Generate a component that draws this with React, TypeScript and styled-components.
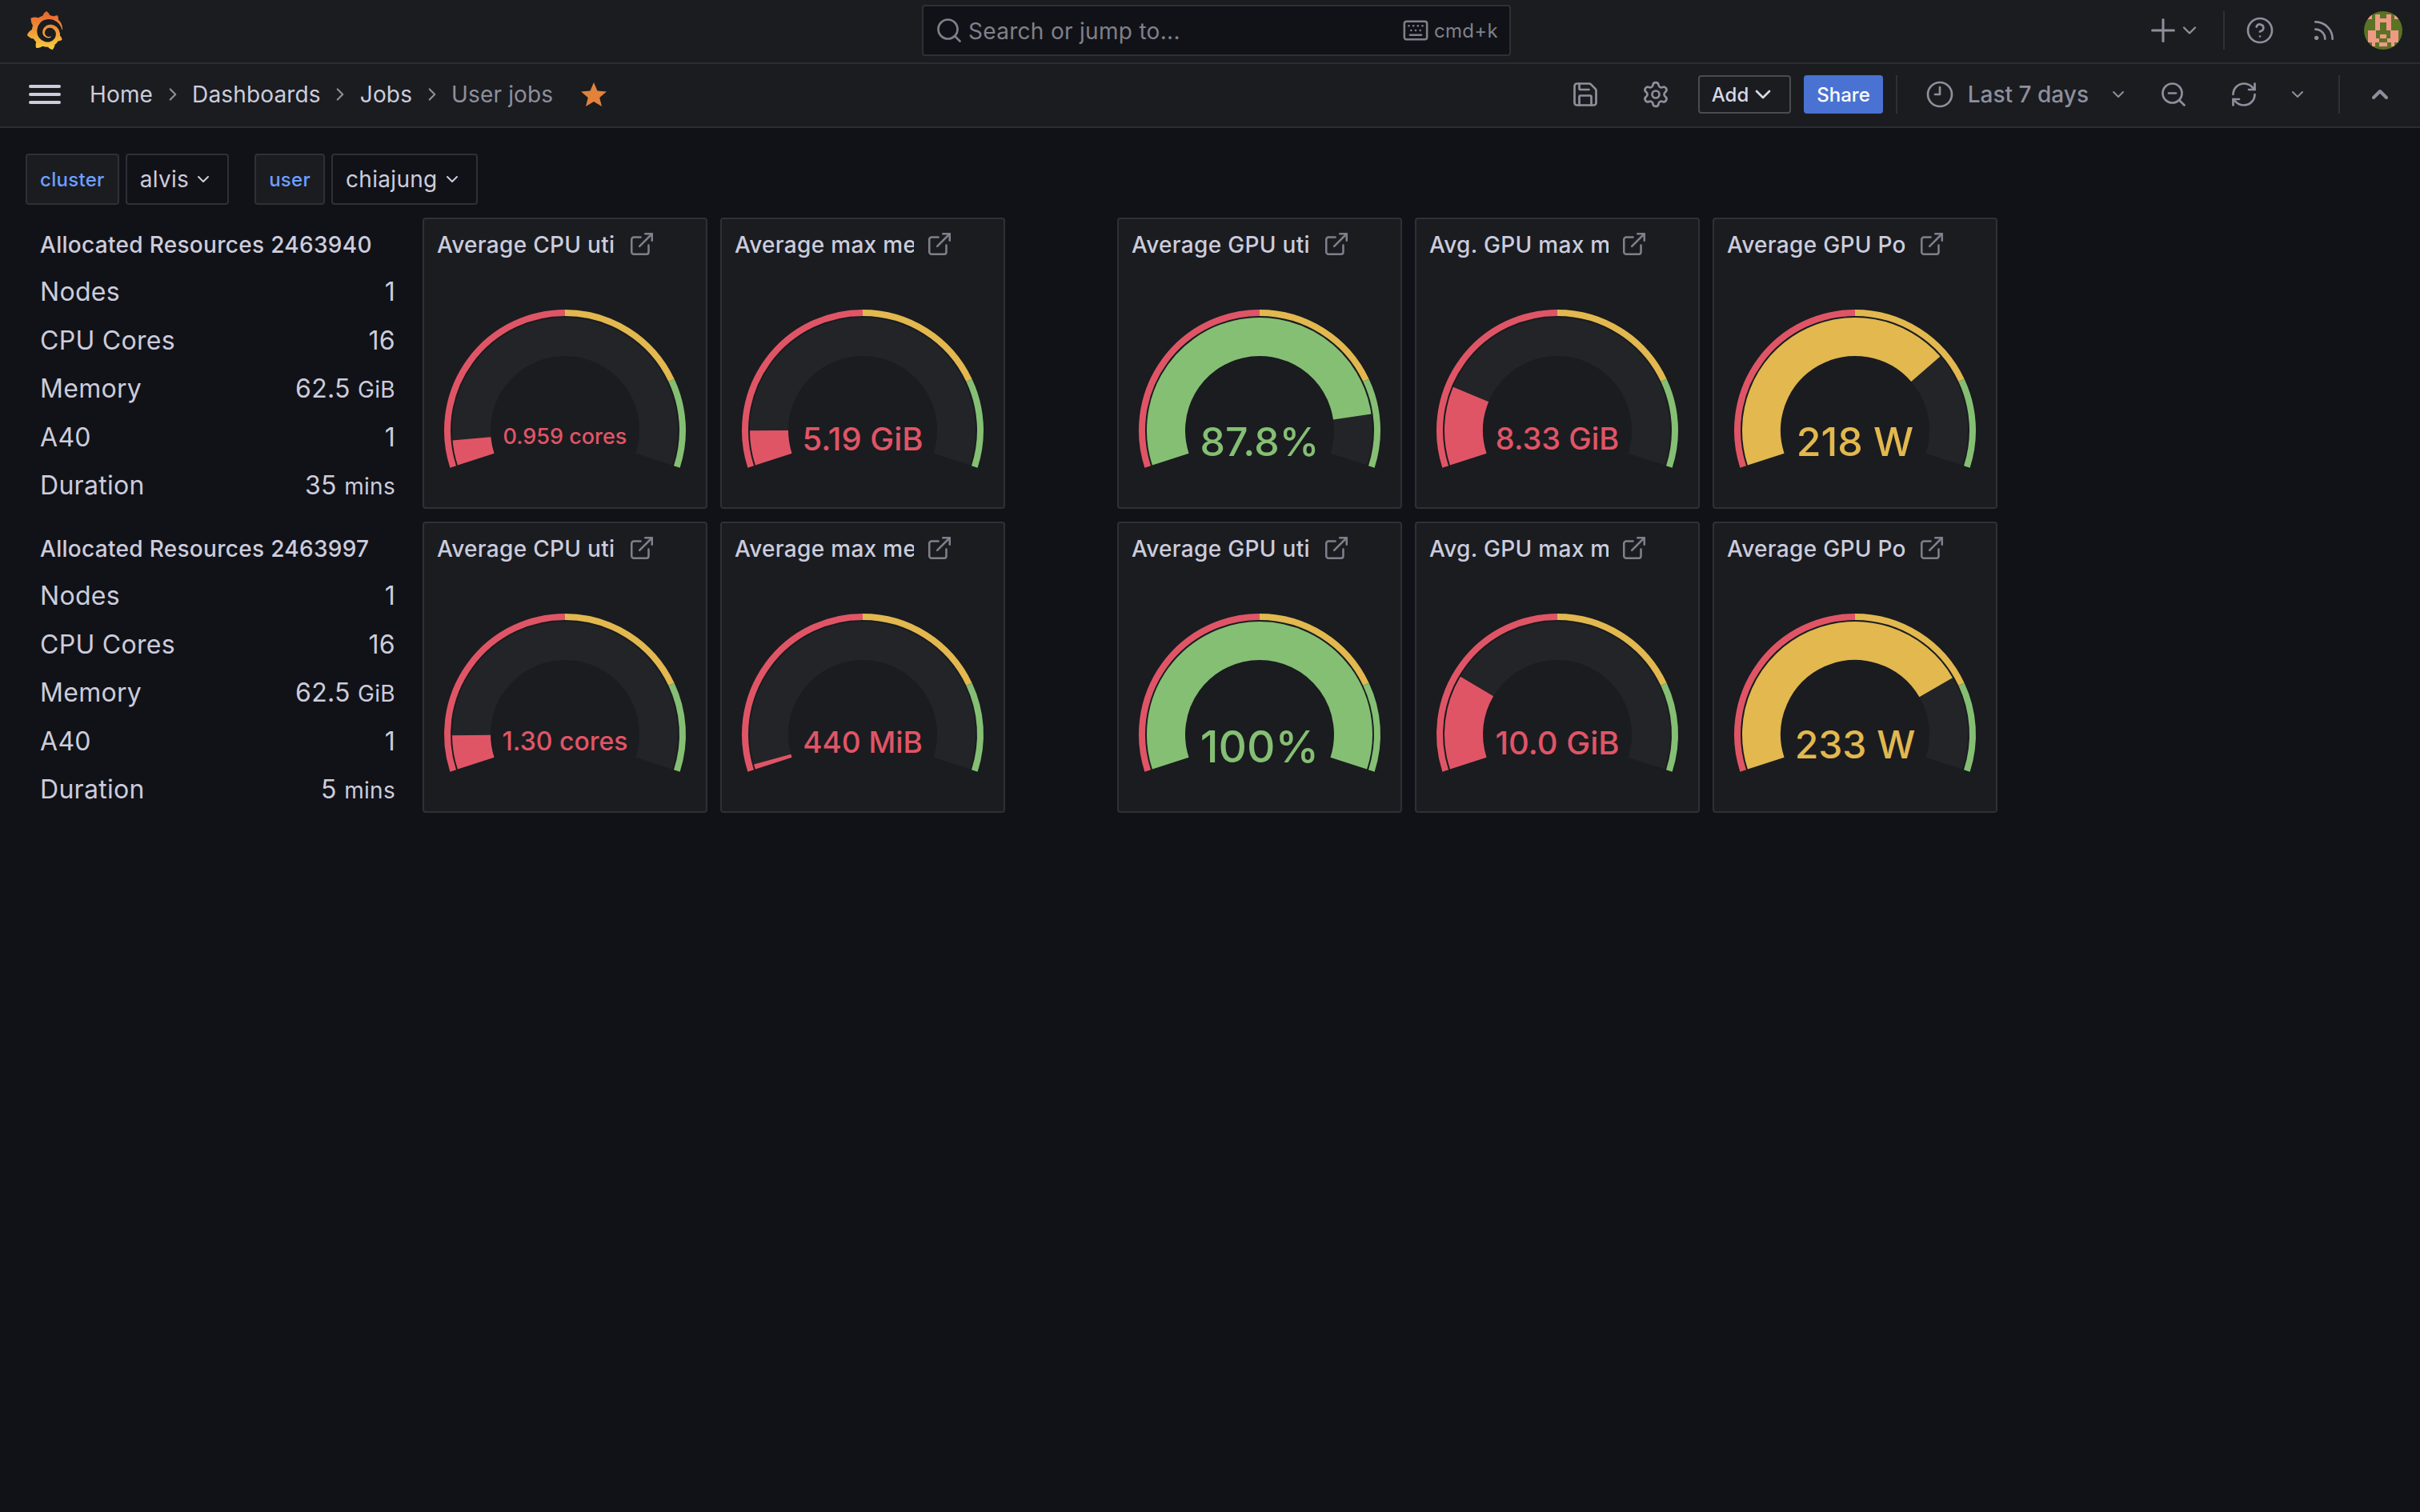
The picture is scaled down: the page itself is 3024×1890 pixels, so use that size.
import React from 'react'
import styled, { createGlobalStyle } from 'styled-components'
import {
  ChevronDown,
  ChevronRight,
  ChevronUp,
  CircleHelp,
  Clock9,
  ExternalLink,
  Keyboard,
  Plus,
  RefreshCw,
  Rss,
  Save,
  Search,
  Settings,
  ZoomOut,
} from 'lucide-react'
import { SiGrafana } from 'react-icons/si'

const RED = '#e05566'
const YELLOW = '#e2b84f'
const GREEN = '#85bf73'

const GlobalStyle = createGlobalStyle`
  html, body {
    margin: 0;
    background: #111217;
    color: #ccccdc;
    font-family: Inter, "Noto Sans", sans-serif;
    letter-spacing: 0.3px;
  }
  * {
    box-sizing: border-box;
  }
`

const Page = styled.div`
  min-height: 1890px;
  background: #111217;
`

const TopBar = styled.header`
  display: grid;
  grid-template-columns: 1fr 736px 1fr;
  align-items: center;
  height: 80px;
  padding: 0 22px 2px 38px;
  background: #1a1c20;
  border-bottom: 2px solid #2c2d32;
`

const LogoBox = styled.div`
  display: flex;
  align-items: center;
  margin-left: -6px;
  color: #e8602f;
`

const SearchBox = styled.div`
  display: flex;
  align-items: center;
  height: 64px;
  padding: 0 14px 0 14px;
  background: #111217;
  border: 2px solid #2f3036;
  border-radius: 4px;
  color: #7f808b;
`

const SearchText = styled.span`
  flex: 1;
  margin-left: 6px;
  padding-top: 1px;
  font-size: 28px;
`

const Shortcut = styled.span`
  margin-left: 6px;
  font-size: 24px;
`

const TopActions = styled.div`
  display: flex;
  align-items: center;
  justify-content: flex-end;
  color: #8e8f9c;
`

const IconSlot = styled.span<{ $w: number; $ml?: number }>`
  display: flex;
  align-items: center;
  justify-content: center;
  flex: none;
  width: ${p => p.$w}px;
  margin-left: ${p => p.$ml ?? 0}px;
  color: #8e8f9c;
`

const Divider = styled.span<{ $ml: number; $h?: number }>`
  flex: none;
  width: 2px;
  height: ${p => p.$h ?? 48}px;
  margin-left: ${p => p.$ml}px;
  background: #2f3036;
`

const Avatar = styled.svg`
  display: block;
  width: 48px;
  height: 48px;
  margin-left: 30px;
`

const NavBar = styled.nav`
  display: flex;
  align-items: center;
  height: 80px;
  padding: 0 34px 2px 36px;
  background: #1a1c20;
  border-bottom: 2px solid #2c2d32;
`

const Burger = styled.svg`
  display: block;
  flex: none;
  width: 40px;
  height: 24px;
  margin-right: 36px;
`

const Crumb = styled.span<{ $muted?: boolean }>`
  font-size: 28px;
  letter-spacing: 0.15px;
  color: ${p => (p.$muted ? '#8e8f9c' : '#ccccdc')};
`

const CrumbSep = styled.span`
  display: flex;
  justify-content: center;
  width: 49px;
  color: #8e8f9c;
`

const StarIcon = styled.svg`
  display: block;
  width: 32px;
  height: 30px;
  margin-left: 35px;
`

const NavActions = styled.div`
  display: flex;
  align-items: center;
  margin-left: auto;
`

const AddButton = styled.button`
  display: flex;
  align-items: center;
  gap: 2px;
  height: 48px;
  margin-left: 29px;
  padding: 0 17px 0 15px;
  background: transparent;
  border: 2px solid #4b4c52;
  border-radius: 4px;
  color: #d8d8e5;
  font: 500 24px Inter, sans-serif;
`

const ShareButton = styled.button`
  height: 48px;
  margin-left: 16px;
  padding: 0 16px;
  background: #4a72d2;
  border: 0;
  border-radius: 4px;
  color: #fff;
  font: 500 24px Inter, sans-serif;
`

const TimeLabel = styled.span`
  margin-left: 17px;
  color: #8e8f9c;
  font-size: 28px;
  font-weight: 500;
  letter-spacing: 0;
`

const Variables = styled.div`
  display: flex;
  align-items: center;
  padding: 32px 32px 16px;
`

const VarLabel = styled.span`
  display: flex;
  align-items: center;
  height: 64px;
  padding: 0 16px;
  background: #1a1c20;
  border: 2px solid #2f3036;
  border-radius: 4px;
  color: #6e9fff;
  font-size: 24px;
  font-weight: 500;
`

const VarValue = styled.span<{ $last?: boolean }>`
  display: flex;
  align-items: center;
  gap: 6px;
  height: 64px;
  margin-left: 8px;
  margin-right: ${p => (p.$last ? 0 : 32)}px;
  padding: 0 18px 0 16px;
  border: 2px solid #2f3036;
  border-radius: 4px;
  color: #ccccdc;
  font-size: 28px;
`

const Board = styled.main`
  display: grid;
  grid-template-columns: repeat(24, 108px);
  grid-auto-rows: 364px;
  gap: 16px;
  padding-left: 32px;
`

const StatPanel = styled.section`
  grid-column: 1 / span 4;
  padding: 0 16px;
  border: 2px solid transparent;
`

const StatTitle = styled.h2`
  height: 61px;
  margin: 0;
  color: #ccccdc;
  font-size: 28px;
  font-weight: 500;
  line-height: 65px;
  white-space: nowrap;
`

const StatRow = styled.div`
  display: flex;
  justify-content: space-between;
  height: 60.5px;
  color: #ccccdc;
  font-size: 32px;
  line-height: 60.5px;
`

const StatUnit = styled.span`
  font-size: 28px;
`

const GaugePanel = styled.section<{ $start?: number }>`
  grid-column: ${p => (p.$start ? `${p.$start} / span 3` : 'span 3')};
  display: flex;
  flex-direction: column;
  background: #1a1c20;
  border: 2px solid #2f3036;
  border-radius: 4px;
`

const PanelHeader = styled.div`
  display: flex;
  align-items: center;
  flex: none;
  height: 62px;
  padding-left: 16px;
`

const PanelTitle = styled.h3`
  flex: none;
  width: 224px;
  margin: 0;
  padding-top: 2px;
  overflow: hidden;
  color: #ccccdc;
  font-size: 28px;
  font-weight: 500;
  white-space: nowrap;
`

const LinkIcon = styled(ExternalLink)`
  flex: none;
  margin-left: 15px;
  color: #7f808b;
`

const GaugeSvg = styled.svg`
  display: block;
  width: 352px;
  height: 298px;
`

const GaugeValue = styled.text`
  font-family: Inter, sans-serif;
  font-weight: 500;
  letter-spacing: 0;
  text-anchor: middle;
`

const HiddenDefs = styled.svg`
  position: absolute;
  width: 0;
  height: 0;
`

const CX = 176
const CY = 202

function pt(r: number, f: number) {
  const a = ((-108 + 216 * f) * Math.PI) / 180
  return `${(CX + r * Math.sin(a)).toFixed(2)} ${(CY - r * Math.cos(a)).toFixed(2)}`
}

function arc(r: number, f0: number, f1: number) {
  const large = (f1 - f0) * 216 > 180 ? 1 : 0
  return `M ${pt(r, f0)} A ${r} ${r} 0 ${large} 1 ${pt(r, f1)}`
}

type GaugeData = {
  title: string
  value: string
  fraction: number
  color: string
  size: number
  start?: number
}

const Gauge = ({ title, value, fraction, color, size, start }: GaugeData) => (
  <GaugePanel $start={start}>
    <PanelHeader>
      <PanelTitle>{title}</PanelTitle>
      <LinkIcon size={34} strokeWidth={1.8} />
    </PanelHeader>
    <GaugeSvg viewBox="0 0 352 298">
      <path d={arc(147, 0, 0.5)} fill="none" stroke={RED} strokeWidth={8} />
      <path d={arc(147, 0.5, 0.8)} fill="none" stroke={YELLOW} strokeWidth={8} />
      <path d={arc(147, 0.8, 1)} fill="none" stroke={GREEN} strokeWidth={8} />
      <path d={arc(117, 0, 1)} fill="none" stroke="#232428" strokeWidth={48} />
      <path d={arc(117, 0, fraction)} fill="none" stroke={color} strokeWidth={48} />
      <GaugeValue x={CX} y={CY + size * 0.63} fill={color} fontSize={size}>
        {value}
      </GaugeValue>
    </GaugeSvg>
  </GaugePanel>
)

const Stat = ({ id, duration, unit }: { id: string; duration: string; unit: string }) => (
  <StatPanel>
    <StatTitle>Allocated Resources {id}</StatTitle>
    <StatRow><span>Nodes</span><span>1</span></StatRow>
    <StatRow><span>CPU Cores</span><span>16</span></StatRow>
    <StatRow><span>Memory</span><span>62.5 <StatUnit>GiB</StatUnit></span></StatRow>
    <StatRow><span>A40</span><span>1</span></StatRow>
    <StatRow><span>Duration</span><span>{duration} <StatUnit>{unit}</StatUnit></span></StatRow>
  </StatPanel>
)

const avatarBlocks = [
  [57, 60, 15, 15], [156, 60, 15, 15],
  [84, 57, 18, 60], [126, 57, 18, 60], [84, 72, 60, 15],
  [57, 117, 30, 45], [141, 117, 30, 45],
  [102, 132, 24, 15], [87, 147, 12, 15], [129, 147, 12, 15],
  [99, 162, 30, 15], [72, 162, 12, 15], [144, 162, 12, 15],
]

const firstRow: GaugeData[] = [
  { title: 'Average CPU uti', value: '0.959 cores', fraction: 0.06, color: RED, size: 27 },
  { title: 'Average max me', value: '5.19 GiB', fraction: 0.083, color: RED, size: 40 },
  { title: 'Average GPU uti', value: '87.8%', fraction: 0.878, color: GREEN, size: 50, start: 12 },
  { title: 'Avg. GPU max m', value: '8.33 GiB', fraction: 0.188, color: RED, size: 38 },
  { title: 'Average GPU Po', value: '218 W', fraction: 0.727, color: YELLOW, size: 50 },
]

const secondRow: GaugeData[] = [
  { title: 'Average CPU uti', value: '1.30 cores', fraction: 0.081, color: RED, size: 32 },
  { title: 'Average max me', value: '440 MiB', fraction: 0.012, color: RED, size: 37 },
  { title: 'Average GPU uti', value: '100%', fraction: 1, color: GREEN, size: 55, start: 12 },
  { title: 'Avg. GPU max m', value: '10.0 GiB', fraction: 0.226, color: RED, size: 40 },
  { title: 'Average GPU Po', value: '233 W', fraction: 0.777, color: YELLOW, size: 48 },
]

const App: React.FunctionComponent = () => {
  return (
    <>
      <GlobalStyle />
      <HiddenDefs aria-hidden="true">
        <defs>
          <linearGradient id="grafana-logo" x1="0" y1="0" x2="0" y2="1">
            <stop offset="0" stopColor="#e8602f" />
            <stop offset="1" stopColor="#f6cf3f" />
          </linearGradient>
        </defs>
      </HiddenDefs>
      <Page>
        <TopBar>
          <LogoBox>
            <SiGrafana size={48} fill="url(#grafana-logo)" />
          </LogoBox>
          <SearchBox>
            <Search size={36} strokeWidth={1.8} />
            <SearchText>Search or jump to...</SearchText>
            <Keyboard size={34} strokeWidth={1.8} />
            <Shortcut>cmd+k</Shortcut>
          </SearchBox>
          <TopActions>
            <Plus size={46} strokeWidth={1.6} />
            <IconSlot $w={32} $ml={-6}><ChevronDown size={28} strokeWidth={2} /></IconSlot>
            <Divider $ml={26} />
            <IconSlot $w={40} $ml={24}><CircleHelp size={36} strokeWidth={1.8} /></IconSlot>
            <IconSlot $w={40} $ml={40}><Rss size={32} strokeWidth={2} /></IconSlot>
            <Avatar viewBox="42 45 144 144">
              <clipPath id="avatar-clip">
                <circle cx="114" cy="117" r="72" />
              </clipPath>
              <g clipPath="url(#avatar-clip)">
                <rect x="42" y="45" width="144" height="144" fill="#5a7324" />
                {avatarBlocks.map(([x, y, w, h]) => (
                  <rect key={`${x}-${y}`} x={x} y={y} width={w} height={h} fill="#ef9a87" />
                ))}
              </g>
            </Avatar>
          </TopActions>
        </TopBar>
        <NavBar>
          <Burger viewBox="0 0 40 24">
            <rect x="0" y="0" width="40" height="4" rx="2" fill="#ccccdc" />
            <rect x="0" y="10" width="40" height="4" rx="2" fill="#ccccdc" />
            <rect x="0" y="20" width="40" height="4" rx="2" fill="#ccccdc" />
          </Burger>
          <Crumb>Home</Crumb>
          <CrumbSep><ChevronRight size={26} strokeWidth={2} /></CrumbSep>
          <Crumb>Dashboards</Crumb>
          <CrumbSep><ChevronRight size={26} strokeWidth={2} /></CrumbSep>
          <Crumb>Jobs</Crumb>
          <CrumbSep><ChevronRight size={26} strokeWidth={2} /></CrumbSep>
          <Crumb $muted>User jobs</Crumb>
          <StarIcon viewBox="0 0 32 30">
            <path d="M16 0 L20.5 10.6 L32 11.5 L23.2 19 L26 30 L16 24.1 L6 30 L8.8 19 L0 11.5 L11.5 10.6 Z" fill="#e3823a" />
          </StarIcon>
          <NavActions>
            <IconSlot $w={48}><Save size={36} strokeWidth={1.8} /></IconSlot>
            <IconSlot $w={48} $ml={40}><Settings size={36} strokeWidth={1.8} /></IconSlot>
            <AddButton>Add<ChevronDown size={32} strokeWidth={2} /></AddButton>
            <ShareButton>Share</ShareButton>
            <Divider $ml={16} />
            <IconSlot $w={36} $ml={35}><Clock9 size={36} strokeWidth={1.8} /></IconSlot>
            <TimeLabel>Last 7 days</TimeLabel>
            <IconSlot $w={24} $ml={25}><ChevronDown size={26} strokeWidth={2} /></IconSlot>
            <IconSlot $w={40} $ml={37}><ZoomOut size={36} strokeWidth={1.8} /></IconSlot>
            <IconSlot $w={40} $ml={48}><RefreshCw size={36} strokeWidth={1.8} /></IconSlot>
            <IconSlot $w={24} $ml={35}><ChevronDown size={26} strokeWidth={2} /></IconSlot>
            <Divider $ml={39} />
            <IconSlot $w={32} $ml={34}><ChevronUp size={34} strokeWidth={3} /></IconSlot>
          </NavActions>
        </NavBar>
        <Variables>
          <VarLabel>cluster</VarLabel>
          <VarValue>alvis<ChevronDown size={24} strokeWidth={2} /></VarValue>
          <VarLabel>user</VarLabel>
          <VarValue $last>chiajung<ChevronDown size={24} strokeWidth={2} /></VarValue>
        </Variables>
        <Board>
          <Stat id="2463940" duration="35" unit="mins" />
          {firstRow.map(g => <Gauge key={g.title} {...g} />)}
          <Stat id="2463997" duration="5" unit="mins" />
          {secondRow.map(g => <Gauge key={g.title} {...g} />)}
        </Board>
      </Page>
    </>
  )
}

export default App
